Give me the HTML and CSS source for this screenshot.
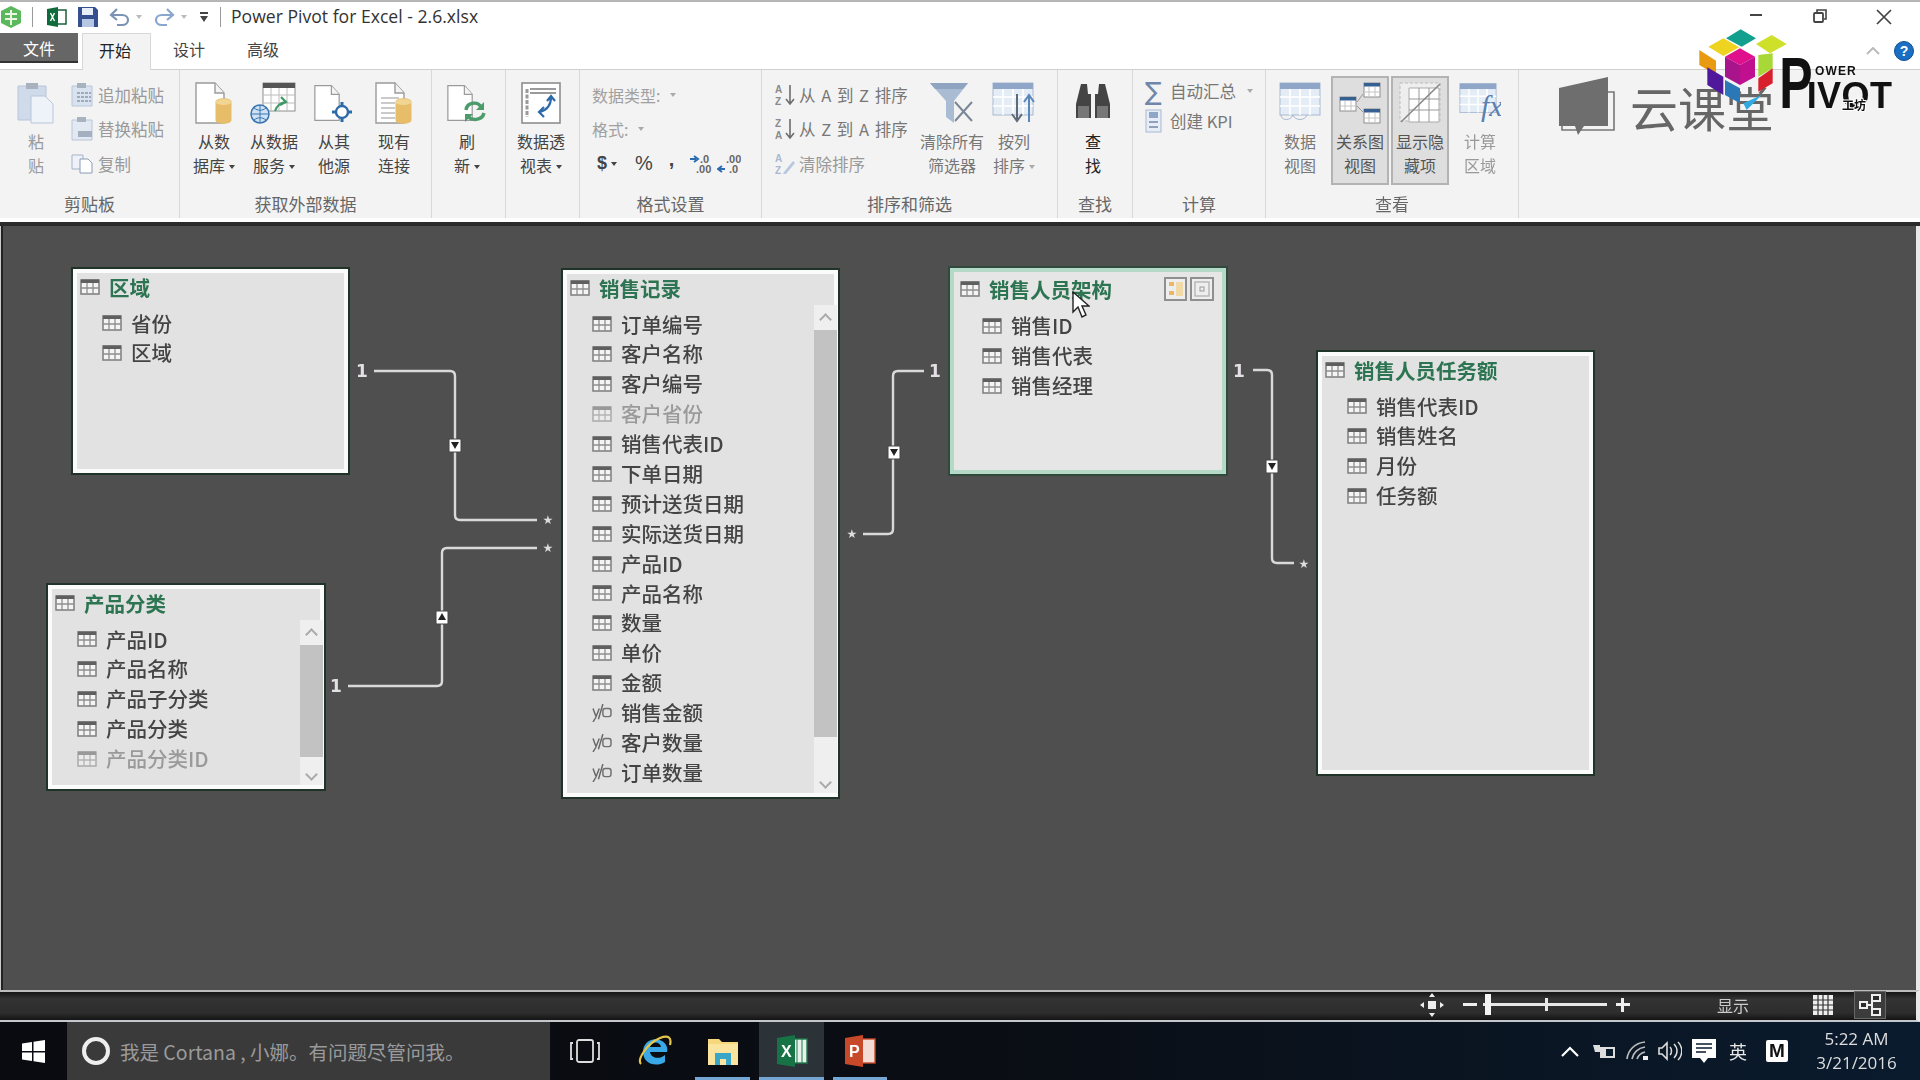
FILE: index.html
```html
<!DOCTYPE html>
<html lang="zh-CN">
<head>
  <meta charset="UTF-8">
  <title>Power Pivot for Excel - 2.6.xlsx</title>
  <link rel="stylesheet" href="styles.css">
</head>
<body>

  <!-- shared icons -->
  <svg class="defs" width="0" height="0">
    <symbol id="tbl" viewBox="0 0 20 18">
      <rect x="1" y="2" width="18" height="14" fill="#f4f4f4" stroke="#7d7d7d" stroke-width="1.5"/>
      <rect x="1" y="1.5" width="18" height="3.5" fill="#5f5f5f"/>
      <path d="M7 5v11M13 5v11M1 10h18" stroke="#8f8f8f" stroke-width="1.3"/>
    </symbol>
    <symbol id="fx" viewBox="0 0 22 20">
      <path d="M1 5l3 8M8 5L4 15l-3 5M12 0L7 17" fill="none" stroke="#666" stroke-width="1.6"/>
      <rect x="12" y="5" width="9" height="9" rx="2.5" fill="none" stroke="#6f6f6f" stroke-width="1.6"/>
    </symbol>
    <symbol id="doc" viewBox="0 0 38 42">
      <path d="M1 1h19l9 10v30H1z" fill="#fff" stroke="#9b9b9b" stroke-width="1.4"/>
      <path d="M20 1v10h9" fill="#f4f4f4" stroke="#9b9b9b" stroke-width="1.4"/>
    </symbol>
    <symbol id="cyl" viewBox="0 0 16 26">
      <path d="M0 4c0-5 16-5 16 0v18c0 5-16 5-16 0z" fill="#e7bd69"/>
      <ellipse cx="8" cy="4" rx="8" ry="3" fill="#f1d592"/>
    </symbol>
    <symbol id="grid" viewBox="0 0 42 36">
      <rect x="1" y="1" width="40" height="32" fill="#e4ecf6" stroke="#a9b9d0"/>
      <rect x="1" y="1" width="40" height="6" fill="#8fa6c8"/>
      <path d="M11 7v26M21 7v26M31 7v26M1 15h40M1 24h40" stroke="#fff" stroke-width="1.6"/>
    </symbol>
    <symbol id="mini" viewBox="0 0 18 16">
      <rect x="1" y="1" width="16" height="14" fill="#fff" stroke="#8e8e8e"/>
      <rect x="1" y="1" width="16" height="3.5" fill="#365f92"/>
      <path d="M6 5v10M12 5v10M1 10h16" stroke="#c4c4c4"/>
    </symbol>
  </svg>

  <div class="app">

    <header class="titlebar">
      <svg class="qat-app" width="22" height="24" viewBox="0 0 22 24">
        <path d="M11 1l10 5v12l-10 5-10-5V6z" fill="#5cb85c"/>
        <path d="M11 5v15M5 9h12M5 14h12" stroke="#e8f6e2" stroke-width="2"/>
      </svg>
      <span class="qat-sep"></span>
      <svg class="qat-excel" width="20" height="20" viewBox="0 0 20 20">
        <rect x="9" y="3" width="10" height="14" fill="#fff" stroke="#1b5e3a" stroke-width="1.5"/>
        <path d="M0 2l11-2v20L0 18z" fill="#0f6b3c"/>
        <path d="M3.5 6l4 8M7.5 6l-4 8" stroke="#fff" stroke-width="1.4"/>
      </svg>
      <svg class="qat-save" width="20" height="20" viewBox="0 0 20 20">
        <path d="M0 0h17l3 3v17H0z" fill="#36508f"/>
        <rect x="4" y="1" width="11" height="7" fill="#e8eef8"/>
        <rect x="4" y="12" width="12" height="8" fill="#b6c7e4"/>
      </svg>
      <svg class="qat-undo" width="21" height="20" viewBox="0 0 21 20">
        <path d="M8 2L2 8l6 5M2 8h11c8 0 8 10 0 10H8" fill="none" stroke="#7d93b5" stroke-width="2.2"/>
      </svg>
      <span class="qat-drop"></span>
      <svg class="qat-redo" width="22" height="20" viewBox="0 0 22 20">
        <path d="M14 2l6 6-6 5M20 8H9c-8 0-8 10 0 10h5" fill="none" stroke="#88a6d0" stroke-width="2.2"/>
      </svg>
      <span class="qat-drop"></span>
      <svg class="qat-custom" width="8" height="11" viewBox="0 0 8 11">
        <path d="M0 0h8v2H0zM0 4h8l-4 6z" fill="#444"/>
      </svg>
      <span class="qat-sep last"></span>
      <span class="doc-title">Power Pivot for Excel - 2.6.xlsx</span>
      <div class="win-controls">
        <span class="win-btn"><svg width="12" height="12" viewBox="0 0 12 12"><path d="M0 6h12" stroke="#444" stroke-width="2"/></svg></span>
        <span class="win-btn"><svg width="14" height="14" viewBox="0 0 14 14"><rect x="1" y="4" width="9" height="9" rx="1" fill="none" stroke="#444" stroke-width="1.8"/><path d="M4 3V1h9v9h-2" fill="none" stroke="#444" stroke-width="1.6"/></svg></span>
        <span class="win-btn"><svg width="16" height="16" viewBox="0 0 16 16"><path d="M1 1l14 14M15 1L1 15" stroke="#444" stroke-width="1.7"/></svg></span>
      </div>
    </header>

    <nav class="tabs">
      <span class="tab-file">文件</span>
      <span class="tab tab-home">开始</span>
      <span class="tab tab-design">设计</span>
      <span class="tab tab-adv">高级</span>
      <div class="tabs-right">
        <svg width="14" height="8" viewBox="0 0 14 8"><path d="M1 7l6-6 6 6" fill="none" stroke="#bbb" stroke-width="2"/></svg>
        <span class="help">?</span>
      </div>
    </nav>

    <section class="ribbon">

      <div class="group g-clip">
        <div class="group-body">
          <div class="big off">
            <svg width="38" height="42" viewBox="0 0 38 42">
              <path d="M1 4h28v34H1z" fill="#cfdaea" stroke="#b9c6d8"/>
              <rect x="9" y="1" width="12" height="6" fill="#a9b3c0"/>
              <path d="M14 14h14l8 8v19H14z" fill="#eef3fa" stroke="#b9c6d8"/>
            </svg>
            <span>粘</span><span>贴</span>
          </div>
          <div class="small-col">
            <div class="small off"><svg width="23" height="24" viewBox="0 0 23 24"><path d="M1 3h20v20H1z" fill="#d9e2ef" stroke="#b9c6d8"/><rect x="6" y="0" width="9" height="5" fill="#a9b3c0"/><path d="M6 10h14M6 14h14M6 18h14" stroke="#8b98ad" stroke-width="1.4" stroke-dasharray="3 1"/></svg><span>追加粘贴</span></div>
            <div class="small off"><svg width="23" height="24" viewBox="0 0 23 24"><path d="M1 3h20v20H1z" fill="#e3e9f2" stroke="#b9c6d8"/><rect x="6" y="0" width="9" height="5" fill="#a9b3c0"/><rect x="7" y="14" width="14" height="6" fill="#a4afc0"/></svg><span>替换粘贴</span></div>
            <div class="small off"><svg width="23" height="20" viewBox="0 0 23 20"><path d="M1 1h11v14H1z" fill="#eef2f8" stroke="#a5b3c8"/><path d="M9 5h8l4 4v10H9z" fill="#fff" stroke="#8b9cb5"/></svg><span>复制</span></div>
          </div>
        </div>
        <div class="group-label">剪贴板</div>
      </div>

      <div class="group g-data">
        <div class="group-body">
          <div class="big">
            <svg width="38" height="42" viewBox="0 0 38 42"><use href="#doc" width="38" height="42"/><use href="#cyl" x="20" y="16" width="17" height="26"/></svg>
            <span>从数</span><span>据库<i class="caret"></i></span>
          </div>
          <div class="big">
            <svg width="50" height="42" viewBox="0 0 50 42">
              <rect x="14" y="1" width="32" height="28" fill="#fff" stroke="#8e8e8e"/>
              <rect x="14" y="1" width="32" height="5" fill="#555"/>
              <path d="M22 6v23M30 6v23M38 6v23M14 13h32M14 21h32" stroke="#bbb"/>
              <circle cx="11" cy="32" r="9" fill="#cfe2f5" stroke="#3a75b0" stroke-width="1.5"/>
              <path d="M2 32h18M11 23v18M5 26c4 3 8 3 12 0M5 38c4-3 8-3 12 0" fill="none" stroke="#3a75b0"/>
              <path d="M26 29c2-6 5-8 10-9M32 15l5 5-6 3" fill="none" stroke="#3f9a68" stroke-width="2.2"/>
            </svg>
            <span>从数据</span><span>服务<i class="caret"></i></span>
          </div>
          <div class="big">
            <svg width="40" height="42" viewBox="0 0 40 42">
              <use href="#doc" width="33" height="42"/>
              <circle cx="28" cy="30" r="6" fill="#fff" stroke="#2f6aa8" stroke-width="2.4"/>
              <path d="M28 20v4M28 36v4M18 30h4M34 30h4" stroke="#2f6aa8" stroke-width="3"/>
            </svg>
            <span>从其</span><span>他源</span>
          </div>
          <div class="big">
            <svg width="38" height="42" viewBox="0 0 38 42">
              <use href="#doc" width="38" height="42"/>
              <path d="M6 16h18M6 21h14M6 26h14M6 31h14M6 36h14" stroke="#b9b9b9" stroke-width="1.5"/>
              <use href="#cyl" x="20" y="16" width="17" height="26"/>
            </svg>
            <span>现有</span><span>连接</span>
          </div>
        </div>
        <div class="group-label">获取外部数据</div>
      </div>

      <div class="group g-refresh">
        <div class="group-body">
          <div class="big">
            <svg width="40" height="42" viewBox="0 0 40 42">
              <use href="#doc" width="33" height="42"/>
              <path d="M19 28c1-8 12-9 15-3M37 31c-2 8-13 8-16 3" fill="none" stroke="#4c9b6a" stroke-width="3.4"/>
              <path d="M37 20v8h-8zM18 40v-8h8z" fill="#4c9b6a"/>
            </svg>
            <span>刷</span><span>新<i class="caret"></i></span>
          </div>
        </div>
        <div class="group-label"></div>
      </div>

      <div class="group g-pivot">
        <div class="group-body">
          <div class="big">
            <svg width="40" height="42" viewBox="0 0 40 42">
              <rect x="1" y="1" width="38" height="40" fill="#fff" stroke="#8e8e8e" stroke-width="1.6"/>
              <path d="M9 7h26M9 11h26" stroke="#9a9a9a" stroke-width="2.2"/>
              <path d="M6 7v28" stroke="#9a9a9a" stroke-width="3" stroke-dasharray="4 1.5"/>
              <path d="M30 15c0 8-4 13-11 15M26 19l4-5 4 5M23 25l-5 5 5 5" fill="none" stroke="#2f6aa8" stroke-width="2.2"/>
            </svg>
            <span>数据透</span><span>视表<i class="caret"></i></span>
          </div>
        </div>
        <div class="group-label"></div>
      </div>

      <div class="group g-format">
        <div class="group-body format-col">
          <div class="format-row off">数据类型:<i class="caret light"></i></div>
          <div class="format-row off">格式:<i class="caret light"></i></div>
          <div class="format-row nums">
            <span class="fmt-dollar">$</span><i class="caret"></i>
            <span class="fmt-pct">%</span>
            <span class="fmt-comma">,</span>
            <svg width="24" height="20" viewBox="0 0 24 20"><path d="M0 5h6M4 2l4 3-4 3" fill="none" stroke="#2b6cb0" stroke-width="2"/><text x="10" y="9" class="fmt-dec">.0</text><text x="6" y="19" class="fmt-dec">.00</text></svg>
            <svg width="24" height="20" viewBox="0 0 24 20"><path d="M8 15H2M5 12l-4 3 4 3" fill="none" stroke="#2b6cb0" stroke-width="2"/><text x="9" y="9" class="fmt-dec">.00</text><text x="12" y="19" class="fmt-dec">.0</text></svg>
          </div>
        </div>
        <div class="group-label">格式设置</div>
      </div>

      <div class="group g-sort">
        <div class="group-body">
          <div class="small-col sort-col">
            <div class="small off-mid"><svg width="20" height="24" viewBox="0 0 20 24"><text x="0" y="10" class="sort-l">A</text><text x="0" y="22" class="sort-l">Z</text><path d="M15 2v19M11 16l4 5 4-5" fill="none" stroke="#6d6d6d" stroke-width="1.6"/></svg><span>从 A 到 Z 排序</span></div>
            <div class="small off-mid"><svg width="20" height="24" viewBox="0 0 20 24"><text x="0" y="10" class="sort-l">Z</text><text x="0" y="22" class="sort-l">A</text><path d="M15 2v19M11 16l4 5 4-5" fill="none" stroke="#6d6d6d" stroke-width="1.6"/></svg><span>从 Z 到 A 排序</span></div>
            <div class="small off"><svg width="20" height="24" viewBox="0 0 20 24"><text x="0" y="10" class="sort-l blue">A</text><text x="0" y="22" class="sort-l blue">Z</text><path d="M9 20L18 9l2 2-9 11H8z" fill="#b8c8de"/></svg><span>清除排序</span></div>
          </div>
          <div class="big off-mid">
            <svg width="46" height="42" viewBox="0 0 46 42">
              <path d="M1 1h38L25 19v22l-8-6V19z" fill="#a9bcd3"/>
              <path d="M1 1h38l-5 6H6z" fill="#8ea4c0"/>
              <path d="M26 20l17 19M43 20L26 39" stroke="#7a8797" stroke-width="2"/>
            </svg>
            <span>清除所有</span><span>筛选器</span>
          </div>
          <div class="big off-mid">
            <svg width="44" height="42" viewBox="0 0 44 42">
              <use href="#grid" width="42" height="36"/>
              <path d="M25 12v26M20 32l5 7 5-7" fill="none" stroke="#5e6a78" stroke-width="2"/>
              <path d="M37 40V14M32 20l5-7 5 7" fill="none" stroke="#5b86b8" stroke-width="2"/>
            </svg>
            <span>按列</span><span>排序<i class="caret light"></i></span>
          </div>
        </div>
        <div class="group-label">排序和筛选</div>
      </div>

      <div class="group g-find">
        <div class="group-body">
          <div class="big dark">
            <svg width="38" height="42" viewBox="0 0 38 42">
              <path d="M7 2h6l1 10h3v24H2V22z" fill="#444"/>
              <path d="M31 2h-6l-1 10h-3v24h15V22z" fill="#444"/>
              <rect x="4" y="24" width="11" height="12" fill="#777"/>
              <rect x="23" y="24" width="11" height="12" fill="#777"/>
            </svg>
            <span>查</span><span>找</span>
          </div>
        </div>
        <div class="group-label">查找</div>
      </div>

      <div class="group g-calc">
        <div class="group-body calc-col">
          <div class="small off-mid"><span class="sigma">∑</span><span>自动汇总</span><i class="caret light"></i></div>
          <div class="small off-mid"><svg class="kpi" width="17" height="24" viewBox="0 0 17 24"><rect x="1" y="1" width="15" height="22" fill="#e6edf6" stroke="#a9b9d0"/><rect x="4" y="3" width="9" height="6" fill="#8fa6c8"/><path d="M4 13h9M4 18h9" stroke="#7488a5" stroke-width="1.6"/></svg><span>创建 KPI</span></div>
        </div>
        <div class="group-label">计算</div>
      </div>

      <div class="group g-view">
        <div class="group-body">
          <div class="big off-mid">
            <svg width="42" height="42" viewBox="0 0 42 42"><use href="#grid" width="42" height="36"/><path d="M2 33c0 6 10 6 12 0 2 6 12 6 14 0" fill="none" stroke="#a9b9d0"/></svg>
            <span>数据</span><span>视图</span>
          </div>
          <div class="big on">
            <svg width="42" height="42" viewBox="0 0 42 42">
              <use href="#mini" x="0" y="14" width="18" height="16"/>
              <use href="#mini" x="24" y="0" width="18" height="16"/>
              <use href="#mini" x="24" y="26" width="18" height="16"/>
              <path d="M18 20l6-8M18 24l6 6" stroke="#999"/>
            </svg>
            <span>关系图</span><span>视图</span>
          </div>
          <div class="big on">
            <svg width="42" height="42" viewBox="0 0 42 42">
              <rect x="1" y="1" width="40" height="38" fill="#eee" stroke="#bcbcbc" stroke-dasharray="3 2"/>
              <path d="M10 6h30v34H10z" fill="#fff" stroke="#aaa"/>
              <path d="M20 6v34M30 6v34M10 17h30M10 28h30" stroke="#999"/>
              <path d="M2 40L41 2" stroke="#888" stroke-width="1.6"/>
            </svg>
            <span>显示隐</span><span>藏项</span>
          </div>
          <div class="big off">
            <svg width="42" height="42" viewBox="0 0 42 42">
              <use href="#grid" width="38" height="34"/>
              <text x="22" y="34" class="fx-big">fx</text>
            </svg>
            <span>计算</span><span>区域</span>
          </div>
        </div>
        <div class="group-label">查看</div>
      </div>

      <div class="group-rest"></div>
    </section>

    <main class="canvas">
      <svg class="links" width="1920" height="768" viewBox="0 222 1920 768">
        <g class="link-line">
          <path d="M374 371H450q5 0 5 5V515q0 5 5 5H537"/>
          <path d="M348 686H437q5 0 5-5V553q0-5 5-5H537"/>
          <path d="M863 534H888q5 0 5-5V376q0-5 5-5H924"/>
          <path d="M1253 370H1267q5 0 5 5V558q0 5 5 5H1294"/>
        </g>
        <g class="link-mark">
          <rect x="449" y="439" width="12" height="13" rx="1"/>
          <rect x="436" y="611" width="12" height="13" rx="1"/>
          <rect x="888" y="446" width="12" height="13" rx="1"/>
          <rect x="1266" y="460" width="12" height="13" rx="1"/>
        </g>
        <g class="link-arrow">
          <path d="M451 442h8l-4 7z"/>
          <path d="M438 620h8l-4-7z"/>
          <path d="M890 449h8l-4 7z"/>
          <path d="M1268 463h8l-4 7z"/>
        </g>
        <g class="link-end">
          <text x="362" y="377">1</text>
          <text x="336" y="692">1</text>
          <text x="935" y="377">1</text>
          <text x="1239" y="377">1</text>
          <text x="548" y="524" class="star">★</text>
          <text x="548" y="552" class="star">★</text>
          <text x="852" y="538" class="star">★</text>
          <text x="1304" y="568" class="star">★</text>
        </g>
      </svg>

      <div class="table t-region">
        <div class="table-title"><svg class="ico"><use href="#tbl"/></svg>区域</div>
        <ul class="table-rows">
          <li><svg class="ico"><use href="#tbl"/></svg>省份</li>
          <li><svg class="ico"><use href="#tbl"/></svg>区域</li>
        </ul>
      </div>

      <div class="table t-product">
        <div class="table-title"><svg class="ico"><use href="#tbl"/></svg>产品分类</div>
        <ul class="table-rows">
          <li><svg class="ico"><use href="#tbl"/></svg>产品ID</li>
          <li><svg class="ico"><use href="#tbl"/></svg>产品名称</li>
          <li><svg class="ico"><use href="#tbl"/></svg>产品子分类</li>
          <li><svg class="ico"><use href="#tbl"/></svg>产品分类</li>
          <li class="hidden"><svg class="ico"><use href="#tbl"/></svg>产品分类ID</li>
        </ul>
        <div class="scroll"><b class="up"></b><b class="thumb"></b><b class="down"></b></div>
      </div>

      <div class="table t-sales">
        <div class="table-title"><svg class="ico"><use href="#tbl"/></svg>销售记录</div>
        <ul class="table-rows">
          <li><svg class="ico"><use href="#tbl"/></svg>订单编号</li>
          <li><svg class="ico"><use href="#tbl"/></svg>客户名称</li>
          <li><svg class="ico"><use href="#tbl"/></svg>客户编号</li>
          <li class="hidden"><svg class="ico"><use href="#tbl"/></svg>客户省份</li>
          <li><svg class="ico"><use href="#tbl"/></svg>销售代表ID</li>
          <li><svg class="ico"><use href="#tbl"/></svg>下单日期</li>
          <li><svg class="ico"><use href="#tbl"/></svg>预计送货日期</li>
          <li><svg class="ico"><use href="#tbl"/></svg>实际送货日期</li>
          <li><svg class="ico"><use href="#tbl"/></svg>产品ID</li>
          <li><svg class="ico"><use href="#tbl"/></svg>产品名称</li>
          <li><svg class="ico"><use href="#tbl"/></svg>数量</li>
          <li><svg class="ico"><use href="#tbl"/></svg>单价</li>
          <li><svg class="ico"><use href="#tbl"/></svg>金额</li>
          <li><svg class="ico"><use href="#fx"/></svg>销售金额</li>
          <li><svg class="ico"><use href="#fx"/></svg>客户数量</li>
          <li><svg class="ico"><use href="#fx"/></svg>订单数量</li>
        </ul>
        <div class="scroll"><b class="up"></b><b class="thumb"></b><b class="down"></b></div>
      </div>

      <div class="table t-staff selected">
        <div class="table-title"><svg class="ico"><use href="#tbl"/></svg>销售人员架构
          <div class="table-tools">
            <svg width="23" height="24" viewBox="0 0 23 24"><rect x="1" y="1" width="21" height="22" fill="#eee" stroke="#8f8f8f" stroke-width="2"/><rect x="5" y="5" width="5" height="4" fill="#e9b765"/><rect x="12" y="5" width="7" height="14" fill="#f1d9a8"/><rect x="5" y="14" width="5" height="4" fill="#e9b765"/></svg>
            <svg width="24" height="24" viewBox="0 0 24 24"><rect x="1" y="1" width="22" height="22" fill="#eee" stroke="#8f8f8f" stroke-width="2"/><rect x="5" y="5" width="14" height="14" fill="none" stroke="#b5b5b5" stroke-width="1.4"/><rect x="10" y="10" width="4" height="4" fill="none" stroke="#999"/></svg>
          </div>
        </div>
        <ul class="table-rows">
          <li><svg class="ico"><use href="#tbl"/></svg>销售ID</li>
          <li><svg class="ico"><use href="#tbl"/></svg>销售代表</li>
          <li><svg class="ico"><use href="#tbl"/></svg>销售经理</li>
        </ul>
        <svg class="cursor" width="18" height="27" viewBox="0 0 18 27">
          <path d="M1 1v20l5-5 4 10 4-2-4-9h7z" fill="#fff" stroke="#222" stroke-width="1.4"/>
        </svg>
      </div>

      <div class="table t-target">
        <div class="table-title"><svg class="ico"><use href="#tbl"/></svg>销售人员任务额</div>
        <ul class="table-rows">
          <li><svg class="ico"><use href="#tbl"/></svg>销售代表ID</li>
          <li><svg class="ico"><use href="#tbl"/></svg>销售姓名</li>
          <li><svg class="ico"><use href="#tbl"/></svg>月份</li>
          <li><svg class="ico"><use href="#tbl"/></svg>任务额</li>
        </ul>
      </div>
    </main>

    <footer class="statusbar">
      <svg class="st-move" width="24" height="24" viewBox="0 0 24 24">
        <rect x="8" y="8" width="8" height="8" fill="#eee"/>
        <path d="M12 0l3 4H9zM12 24l-3-4h6zM0 12l4-3v6zM24 12l-4 3V9z" fill="#eee"/>
      </svg>
      <span class="st-minus"></span>
      <div class="st-slider"><span class="st-tick"></span><span class="st-handle"></span></div>
      <span class="st-plus"></span>
      <span class="st-show">显示</span>
      <svg class="st-grid" width="20" height="20" viewBox="0 0 20 20">
        <rect width="20" height="20" fill="#eee"/>
        <path d="M5 0v20M10 0v20M15 0v20M0 5h20M0 10h20M0 15h20" stroke="#333" stroke-width="1.2"/>
      </svg>
      <span class="st-diagram">
        <svg width="22" height="22" viewBox="0 0 22 22" fill="#2c2c2c" stroke="#eee" stroke-width="2">
          <rect x="1" y="8" width="7" height="6"/><rect x="13" y="1" width="8" height="6"/><rect x="13" y="15" width="8" height="6"/>
          <path d="M8 11h5M13 4v14" fill="none"/>
        </svg>
      </span>
    </footer>

    <div class="taskbar">
      <div class="start">
        <svg width="23" height="23" viewBox="0 0 23 23"><path d="M0 3.5L10 2v9H0zM11.5 1.8L23 0v11H11.5zM0 12.5h10v8.5L0 19.5zM11.5 12.5H23V23l-11.5-1.7z" fill="#fff"/></svg>
      </div>
      <div class="cortana">
        <span class="cortana-ring"></span>
        <span>我是 Cortana , 小娜。有问题尽管问我。</span>
      </div>
      <div class="task-app task-view">
        <svg width="30" height="24" viewBox="0 0 30 24" fill="none" stroke="#ddd" stroke-width="1.8"><rect x="7" y="1" width="16" height="22" rx="2"/><path d="M3 4H1v16h2M27 4h2v16h-2"/></svg>
      </div>
      <div class="task-app task-ie">
        <svg width="34" height="34" viewBox="0 0 34 34">
          <path d="M29 18H12c1 6 9 8 15 3v7c-10 6-22 1-22-10C5 8 15 2 24 7c5 3 6 8 5 11zM12 13h11c-1-6-10-6-11 0z" fill="#3aa7e6" fill-rule="evenodd"/>
          <path d="M3 30C-1 26 8 10 22 4c8-3 12-1 10 7" fill="none" stroke="#e5c54a" stroke-width="2.2"/>
        </svg>
      </div>
      <div class="task-app task-folder running">
        <svg width="32" height="30" viewBox="0 0 32 30">
          <path d="M1 3h11l3 3h16v23H1z" fill="#f6d77c"/>
          <rect x="1" y="8" width="30" height="21" fill="#fbe59e"/>
          <path d="M8 29V17h16v12h-5v-6h-6v6z" fill="#3aa7c8"/>
        </svg>
      </div>
      <div class="task-app task-excel running active">
        <svg width="32" height="32" viewBox="0 0 32 32">
          <rect x="14" y="4" width="17" height="24" fill="#e6f1ea" stroke="#1f7a4a" stroke-width="1.4"/>
          <path d="M21 4v24M26 4v24" stroke="#1f7a4a"/>
          <path d="M1 3l18-3v32L1 29z" fill="#177245"/>
          <text x="5" y="22" class="app-letter">X</text>
        </svg>
      </div>
      <div class="task-app task-ppt running">
        <svg width="32" height="32" viewBox="0 0 32 32">
          <rect x="14" y="4" width="17" height="24" fill="#f3dcd4" stroke="#c8492a" stroke-width="1.4"/>
          <path d="M1 3l18-3v32L1 29z" fill="#c8492a"/>
          <text x="5" y="22" class="app-letter">P</text>
        </svg>
      </div>
      <div class="tray">
        <span class="tray-item"><svg width="18" height="11" viewBox="0 0 18 11"><path d="M1 10l8-8 8 8" fill="none" stroke="#fff" stroke-width="2.2"/></svg></span>
        <span class="tray-item"><svg width="24" height="18" viewBox="0 0 24 18"><rect x="8" y="5" width="15" height="11" fill="#ddd"/><rect x="14" y="7" width="7" height="7" fill="#0b1a2b"/><path d="M1 3h7v7H3z" fill="#ddd"/></svg></span>
        <span class="tray-item"><svg width="24" height="20" viewBox="0 0 24 20" fill="none" stroke="#bbb" stroke-width="1.7"><path d="M1 18C2 9 9 2 19 1M6 18C7 12 12 7 19 6M11 18c1-3 4-6 8-7"/><rect x="17" y="15" width="5" height="4" fill="#eee" stroke="none"/></svg></span>
        <span class="tray-item tray-vol"><svg width="24" height="20" viewBox="0 0 24 20"><path d="M1 7h3l5-5v16l-5-5H1z" fill="none" stroke="#ddd" stroke-width="1.6"/><path d="M12 6c2 2 2 6 0 8M16 3c4 4 4 10 0 14M20 1c5 5 5 13 0 18" fill="none" stroke="#ddd" stroke-width="1.5"/></svg></span>
        <span class="tray-item"><svg width="24" height="25" viewBox="0 0 24 25"><path d="M0 0h24v19h-8l-4 5-4-5H0z" fill="#fff"/><path d="M4 5h16M4 9h16M4 13h10" stroke="#0b1a2b" stroke-width="1.6"/></svg></span>
        <span class="tray-item tray-lang">英</span>
        <span class="tray-item tray-wide"><span class="tray-m">M</span></span>
        <span class="clock"><span>5:22 AM</span><span>3/21/2016</span></span>
      </div>
    </div>
  </div>

  <!-- watermarks burnt into the recording, they sit over the window chrome -->
  <div class="mark-yun">
    <svg width="58" height="60" viewBox="0 0 58 60">
      <path d="M4 16h52v38H4z" fill="none" stroke="#777" stroke-width="1.6"/>
      <path d="M1 12L50 1v49H26l-6 9-3-9H1z" fill="#6e6e6e"/>
    </svg>
    <span>云课堂</span>
  </div>
  <svg class="mark-pivot" width="230" height="110" viewBox="0 0 690 330">
    <polygon points="108,55 152,28 198,55 155,80" fill="#12a08e"/>
    <polygon points="55,80 100,55 148,82 100,108" fill="#eed320"/>
    <polygon points="198,72 245,45 290,72 240,100" fill="#cfe02a"/>
    <polygon points="105,110 150,85 195,110 150,135" fill="#e0108c"/>
    <polygon points="105,110 150,135 150,195 105,170" fill="#a8148c"/>
    <polygon points="195,110 150,135 150,195 195,170" fill="#c01090"/>
    <polygon points="28,90 78,122 78,165 28,135" fill="#e89a10"/>
    <polygon points="205,105 248,100 248,145 205,170" fill="#a8d838"/>
    <polygon points="52,142 100,170 100,225 52,195" fill="#50189a"/>
    <polygon points="105,180 150,205 150,250 105,225" fill="#2a78b8"/>
    <polygon points="205,175 248,145 248,190 205,215" fill="#d8202c"/>
    <polygon points="160,250 215,225 170,270" fill="#30a8e0"/>
    <text x="268" y="265" class="pp-p" textLength="100" lengthAdjust="spacingAndGlyphs">P</text>
    <text x="375" y="166" class="pp-ower" textLength="122">OWER</text>
    <text x="350" y="265" class="pp-ivot" textLength="256">IVOT</text>
    <text x="456" y="270" class="pp-cn">工坊</text>
  </svg>

</body>
</html>
```

FILE: styles.css
```css
html, body {
  margin: 0;
  padding: 0;
  width: 1920px;
  height: 1080px;
  overflow: hidden;
  background: #fff;
  font-family: "Noto Sans CJK SC", "Noto Sans", sans-serif;
  color: #444;
}

.defs {
  position: absolute;
}

.app {
  width: 1920px;
  height: 1080px;
  display: flex;
  flex-direction: column;
  filter: blur(0.6px);
}

/* title bar */
.titlebar {
  height: 32px;
  box-sizing: border-box;
  border-top: 2px solid #b5b5b5;
  display: flex;
  align-items: center;
  background: #fff;
}

.qat-app { margin-right: 10px; }
.qat-excel { margin-left: 14px; margin-right: 11px; }
.qat-save { margin-right: 11px; }
.qat-undo { margin-right: 5px; }
.qat-redo { margin-left: 10px; margin-right: 5px; }
.qat-custom { margin-left: 12px; }

.qat-sep {
  width: 1px;
  height: 20px;
  background: #999;
}

.qat-sep.last {
  margin-left: 12px;
  margin-right: 10px;
}

.qat-drop {
  width: 0;
  height: 0;
  margin: 0 1px;
  border: 3px solid transparent;
  border-top: 4px solid #bbb;
  border-bottom: 0;
}

.doc-title {
  font-family: "Open Sans", sans-serif;
  font-size: 17.6px;
  line-height: 24px;
  margin-top: -2px;
  color: #333;
}

.win-controls {
  margin-left: auto;
  margin-right: 4px;
  display: flex;
}

.win-btn {
  width: 64px;
  display: flex;
  justify-content: center;
}

/* tabs */
.tabs {
  height: 38px;
  display: flex;
  align-items: flex-start;
  background: #fff;
  border-bottom: 1px solid #d0d0d0;
  box-sizing: border-box;
  padding-top: 1px;
  font-size: 16px;
}

.tab-file {
  width: 78px;
  height: 30px;
  background: #666;
  color: #fff;
  text-align: center;
  line-height: 30px;
  border-bottom: 2px solid #333;
  box-sizing: border-box;
}

.tab {
  height: 37px;
  line-height: 32px;
  text-align: center;
}

.tab-home {
  width: 69px;
  margin-left: 4px;
  padding-right: 3px;
  background: #f3f3f3;
  border: 1px solid #d8d8d8;
  border-bottom: 0;
  box-sizing: border-box;
  color: #222;
  height: 37px;
}

.tab-design { width: 60px; margin-left: 8px; }
.tab-adv { width: 60px; margin-left: 14px; }

.tabs-right {
  margin-left: auto;
  margin-right: 6px;
  display: flex;
  align-items: center;
  gap: 14px;
  height: 36px;
}

.help {
  width: 20px;
  height: 20px;
  border-radius: 50%;
  background: #1b6fc2;
  border: 1px solid #0c4f96;
  box-sizing: border-box;
  color: #fff;
  font: bold 14px/18px "Liberation Sans", sans-serif;
  text-align: center;
}

/* ribbon */
.ribbon {
  height: 148px;
  display: flex;
  background: #f3f3f3;
  font-size: 16px;
  line-height: 24px;
  flex-shrink: 0;
}

.group {
  box-sizing: border-box;
  border-right: 1px solid #d8d8d8;
  display: flex;
  flex-direction: column;
}

.g-clip { width: 180px; }
.g-data { width: 252px; }
.g-refresh { width: 74px; }
.g-pivot { width: 74px; }
.g-format { width: 182px; }
.g-sort { width: 296px; }
.g-find { width: 75px; }
.g-calc { width: 133px; }
.g-view { width: 253px; }

.group-rest {
  flex: 1;
}

.group-body {
  flex: 1;
  display: flex;
  min-height: 0;
}

.group-label {
  height: 26px;
  line-height: 24px;
  text-align: center;
  color: #666;
  font-size: 17px;
}

.g-clip .group-body { padding-left: 6px; }
.g-data .group-body { padding-left: 4px; }
.g-refresh .group-body,
.g-pivot .group-body,
.g-find .group-body { padding-left: 5px; }
.g-view .group-body { padding-left: 4px; }
.g-sort .group-body { padding-left: 13px; }

.big {
  width: 60px;
  box-sizing: border-box;
  padding-top: 12px;
  display: flex;
  flex-direction: column;
  align-items: center;
  white-space: nowrap;
  color: #444;
}

.big svg {
  margin-bottom: 4.5px;
  flex-shrink: 0;
}

.big.off { color: #999; }
.big.off-mid { color: #777; }
.big.dark { color: #222; }

.big.on {
  width: 58px;
  height: 109px;
  margin: 6px 1px 0;
  padding-top: 4px;
  background: #dedede;
  border: 2px solid #b3b3b3;
  color: #555;
}

.g-sort .big { margin-right: 2px; }

.small-col {
  margin-left: 5px;
  padding-top: 7.5px;
}

.sort-col {
  width: 147px;
  margin-left: 0;
  flex-shrink: 0;
}

.small {
  height: 34.5px;
  display: flex;
  align-items: center;
  gap: 4px;
  font-size: 16.5px;
  white-space: nowrap;
}

.sort-col .small {
  word-spacing: 2px;
}

.small.off { color: #999; }
.small.off-mid { color: #777; }

.caret {
  display: inline-block;
  width: 0;
  height: 0;
  margin-left: 4px;
  vertical-align: middle;
  border: 3px solid transparent;
  border-top: 4px solid #444;
  border-bottom: 0;
}

.caret.light {
  border-top-color: #aaa;
}

.format-col {
  flex-direction: column;
  padding: 7.5px 0 0 12px;
}

.format-row {
  height: 34.5px;
  display: flex;
  align-items: center;
  white-space: nowrap;
  font-size: 16px;
}

.format-row.off { color: #a0a0a0; }
.format-row.off .caret { margin-left: 10px; }

.fmt-dollar { font: bold 18px "Liberation Sans", sans-serif; margin-left: 5px; }
.fmt-pct { font: 20px "Liberation Sans", sans-serif; margin-left: 18px; }
.fmt-comma { font: bold 20px "Liberation Sans", sans-serif; margin: -8px 16px 0 16px; }
.nums svg { margin-right: 3px; }

.fmt-dec {
  font: bold 11px "Liberation Sans", sans-serif;
  fill: #666;
}

.sort-l {
  font: bold 10px "Liberation Sans", sans-serif;
  fill: #8a8a8a;
}

.sort-l.blue { fill: #a9b9d0; }

.calc-col {
  flex-direction: column;
  padding: 6px 0 0 12px;
}

.calc-col .small {
  height: 30px;
  gap: 7px;
}

.sigma {
  width: 18px;
  font: 25px "DejaVu Sans", sans-serif;
  color: #6e87ab;
}

.kpi { margin-right: 1px; }

.fx-big {
  font: italic 30px "Liberation Serif", serif;
  fill: #5a7fb0;
}

/* diagram canvas */
.canvas {
  flex: 1;
  margin-top: 4px;
  background: #4f4f4f;
  box-shadow: inset 0 4px 0 #2b2b2b, inset 1px 0 0 #ccc, inset 3px 0 0 #222, inset -4px 0 0 #e8e8e8;
  position: relative;
}

.links {
  position: absolute;
  left: 0;
  top: 0;
}

.link-line path {
  fill: none;
  stroke: #d9d9d9;
  stroke-width: 2.4;
}

.link-mark rect {
  fill: #fff;
  stroke: #444;
}

.link-arrow path {
  fill: #222;
}

.link-end text {
  font: bold 17px "DejaVu Sans", sans-serif;
  fill: #e4dfe4;
  text-anchor: middle;
}

.link-end .star {
  font-size: 12px;
  fill: #ddd;
}

.table {
  position: absolute;
  width: 277px;
  box-sizing: border-box;
  background: #e2e2e2;
  border: 5px solid #fbfbfb;
  outline: 2px solid #1f3329;
  outline-offset: -1px;
  font-size: 20.5px;
  font-weight: 500;
  color: #444;
}

.table.selected {
  border-color: #b4d9c6;
  outline-color: #2f4a3c;
  background: #e6e6e6;
}

.t-region { left: 72px; top: 46px; height: 206px; }
.t-product { left: 47px; top: 362px; height: 206px; width: 278px; }
.t-sales { left: 562px; top: 47px; height: 529px; }
.t-staff { left: 949px; top: 45px; height: 208px; width: 278px; }
.t-target { left: 1317px; top: 129px; height: 424px; }

.table-title {
  height: 30px;
  margin-top: -1.5px;
  padding-left: 3px;
  display: flex;
  align-items: center;
  line-height: 30px;
  color: #2d7552;
  font-weight: 700;
}

.selected .table-title {
  margin-top: 2px;
  padding-left: 6px;
}

.ico {
  width: 20px;
  height: 18px;
  margin-right: 9px;
  flex-shrink: 0;
}

.table-rows {
  list-style: none;
  margin: 7px 0 0;
  padding: 0 0 0 25px;
}

.selected .table-rows {
  padding-left: 28px;
}

.table-rows li {
  height: 29.9px;
  line-height: 29.9px;
  display: flex;
  align-items: center;
  white-space: nowrap;
}

.table-rows .hidden {
  color: #9a9a9a;
}

.table-rows .hidden .ico {
  opacity: 0.55;
}

.table-tools {
  margin-left: auto;
  margin-right: 8px;
  display: flex;
  gap: 3px;
}

.cursor {
  position: absolute;
  left: 118px;
  top: 19px;
}

.scroll {
  position: absolute;
  right: -3px;
  top: 31px;
  bottom: 0;
  width: 23px;
  display: flex;
  flex-direction: column;
}

.scroll b {
  display: block;
  background: #efefef;
  height: 25px;
  position: relative;
}

.scroll .thumb {
  flex: 1;
  background: #c2c2c2;
}

.t-sales .scroll .down { height: 56px; }
.t-product .scroll .down { height: 28px; }

.scroll .up::after,
.scroll .down::after {
  content: "";
  position: absolute;
  left: 7px;
  width: 7px;
  height: 7px;
  border-left: 2px solid #aaa;
  border-top: 2px solid #aaa;
  transform: rotate(45deg);
  top: 10px;
}

.scroll .down::after {
  transform: rotate(225deg);
  top: auto;
  bottom: 6px;
}

/* status bar */
.statusbar {
  height: 32px;
  box-sizing: border-box;
  border-top: 2px solid #bdbdbd;
  border-bottom: 2px solid #c4c8cc;
  border-right: 4px solid #e8e8e8;
  background: linear-gradient(#151515, #333 25%, #2d2d2d 75%, #141414);
  display: flex;
  align-items: center;
  justify-content: flex-end;
  padding-right: 30px;
  padding-bottom: 3px;
  color: #ccc;
  font-size: 16px;
}

.st-move { margin-right: 19px; }

.st-minus {
  width: 14px;
  height: 3px;
  background: #eee;
  margin-right: 6px;
}

.st-slider {
  width: 124px;
  height: 3px;
  background: #e8e8e8;
  position: relative;
  margin-right: 9px;
}

.st-tick {
  position: absolute;
  left: 62px;
  top: -5px;
  width: 3px;
  height: 13px;
  background: #e8e8e8;
}

.st-handle {
  position: absolute;
  left: 2px;
  top: -9px;
  width: 6px;
  height: 21px;
  background: #f4f4f4;
}

.st-plus {
  width: 14px;
  height: 14px;
  background: linear-gradient(#eee, #eee) center / 100% 3px no-repeat,
              linear-gradient(#eee, #eee) center / 3px 100% no-repeat;
  margin-right: 87px;
}

.st-show { margin-right: 64px; }
.st-grid { margin-right: 21px; }

.st-diagram {
  width: 32px;
  height: 28px;
  box-sizing: border-box;
  border: 1px solid #666;
  background: #3c3c3c;
  display: flex;
  align-items: center;
  justify-content: center;
}

/* taskbar */
.taskbar {
  height: 58px;
  flex-shrink: 0;
  background: linear-gradient(90deg, #090b10, #0a0d13 50%, #0a1b2e);
  display: flex;
  align-items: stretch;
  color: #ddd;
}

.start {
  width: 67px;
  display: flex;
  align-items: center;
  justify-content: center;
  padding-right: 1px;
  box-sizing: border-box;
}

.cortana {
  width: 483px;
  background: #3a3a3a;
  display: flex;
  align-items: center;
  padding-left: 15px;
  box-sizing: border-box;
  gap: 10px;
  font-size: 19.5px;
  color: #9a9a9a;
  white-space: nowrap;
}

.cortana-ring {
  width: 28px;
  height: 28px;
  box-sizing: border-box;
  border: 4px solid #eee;
  border-radius: 50%;
  flex-shrink: 0;
}

.task-app {
  width: 65px;
  position: relative;
  display: flex;
  align-items: center;
  justify-content: center;
}

.task-view, .task-ie { width: 70px; }
.task-excel, .task-ppt { margin-left: 4px; }
.task-ppt { width: 64px; }

.task-app.active {
  background: #2b3238;
}

.task-app.running::after {
  content: "";
  position: absolute;
  left: 5px;
  right: 5px;
  bottom: 0;
  height: 3px;
  background: #76a7d4;
}

.task-app.active::after {
  left: 0;
  right: 0;
}

.app-letter {
  font: bold 16px "Liberation Sans", sans-serif;
  fill: #fff;
}

.tray {
  margin-left: auto;
  padding-right: 6px;
  display: flex;
  align-items: center;
}

.tray-item {
  width: 34px;
  display: flex;
  justify-content: center;
  align-items: center;
}

.tray-vol { margin-left: -2px; }
.tray-wide { width: 44px; }
.tray-lang { font-size: 18px; color: #e8e8e8; }

.tray-m {
  width: 22px;
  height: 22px;
  background: #fff;
  color: #111;
  font: bold 19px/22px "Liberation Sans", sans-serif;
  text-align: center;
  border-radius: 2px;
}

.clock {
  width: 115px;
  display: flex;
  flex-direction: column;
  align-items: center;
  font: 17px/24px "Open Sans", sans-serif;
  color: #ddd;
}

/* watermarks */
.mark-yun {
  position: absolute;
  left: 1558px;
  top: 76px;
  display: flex;
  align-items: center;
  gap: 14px;
  font-size: 48px;
  line-height: 60px;
  color: #666;
  filter: blur(0.6px);
}

.mark-pivot {
  position: absolute;
  left: 1690px;
  top: 20px;
  filter: blur(0.6px);
}

.pp-p { font: bold 216px "Liberation Sans", sans-serif; fill: #111; }
.pp-ower { font: bold 36px "Liberation Sans", sans-serif; fill: #111; }
.pp-ivot { font: bold 108px "Liberation Sans", sans-serif; fill: #111; }
.pp-cn { font: bold 36px "Noto Sans CJK SC", sans-serif; fill: #111; paint-order: stroke; stroke: #fff; stroke-width: 6px; }
```
